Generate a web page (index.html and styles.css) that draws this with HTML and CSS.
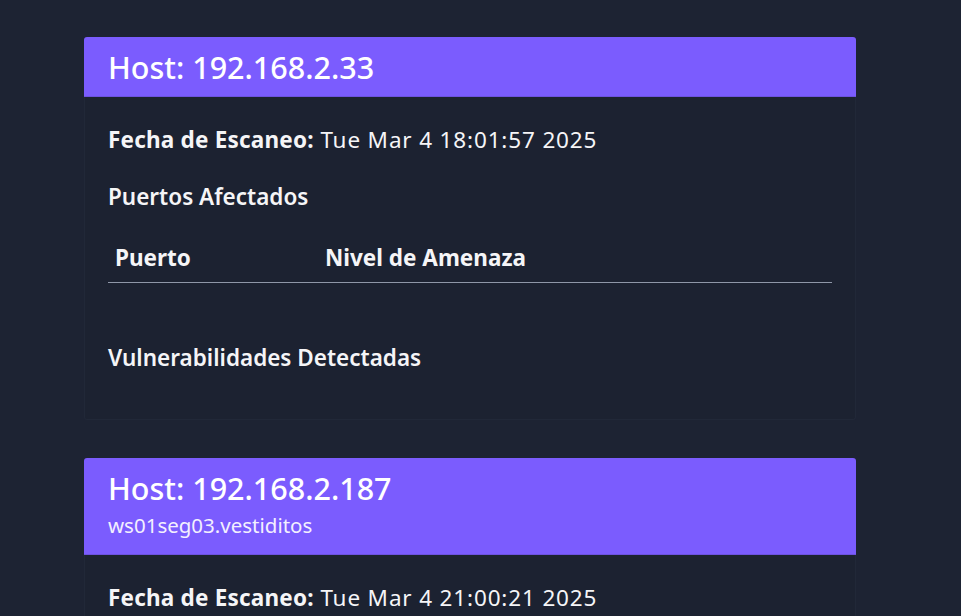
FILE: index.html
```html
<!DOCTYPE html>
<html lang="es">
<head>
<meta charset="utf-8">
<title>Reporte</title>
<link rel="stylesheet" href="styles.css">
</head>
<body>
<main class="page">
  <section class="card">
    <header class="card-head">
      <h2 class="host">Host: 192.168.2.33</h2>
    </header>
    <div class="card-body">
      <p class="scan"><strong>Fecha de Escaneo:</strong> Tue Mar 4 18:01:57 2025</p>
      <h3 class="section-title">Puertos Afectados</h3>
      <table class="ports">
        <thead>
          <tr><th class="col-port">Puerto</th><th>Nivel de Amenaza</th></tr>
        </thead>
        <tbody></tbody>
      </table>
      <h3 class="section-title vulns">Vulnerabilidades Detectadas</h3>
      <div class="vuln-list"></div>
    </div>
  </section>
  <section class="card">
    <header class="card-head">
      <h2 class="host">Host: 192.168.2.187</h2>
      <p class="hostname">ws01seg03.vestiditos</p>
    </header>
    <div class="card-body">
      <p class="scan"><strong>Fecha de Escaneo:</strong> Tue Mar 4 21:00:21 2025</p>
    </div>
  </section>
</main>
</body>
</html>
```
FILE: styles.css
```css
html, body {
  margin: 0;
  padding: 0;
  background: #1d2333;
}
body {
  font-family: "Noto Sans", "Open Sans", sans-serif;
  color: #f5f5f7;
}
.page {
  width: 772px;
  margin-left: 84px;
  padding-top: 37px;
}
.card {
  margin-bottom: 38px;
}
.card-head {
  background: #7b5cfe;
  border-radius: 3px 3px 0 0;
  border-bottom: 1px solid #6d52e0;
  padding: 12px 24px 11px;
}
.host {
  margin: 0;
  font-size: 30.5px;
  font-weight: 500;
  line-height: 36px;
  color: #ffffff;
}
.hostname {
  margin: 4px 0 3px;
  font-size: 20.5px;
  line-height: 30px;
  color: #f3f0ff;
}
.card-body {
  background: #1c2231;
  border: 1px solid #212838;
  border-top: none;
  border-radius: 0 0 3px 3px;
  padding: 28px 23px 46px;
}
.scan {
  margin: 0;
  font-size: 22.5px;
  line-height: 30px;
  letter-spacing: 0.85px;
}
.scan strong {
  font-weight: 700;
  letter-spacing: 0.2px;
}
.section-title {
  margin: 27px 0 0;
  font-size: 22.5px;
  font-weight: 600;
  line-height: 30px;
}
.ports {
  width: 100%;
  border-collapse: collapse;
  margin-top: 25px;
}
.ports th {
  text-align: left;
  font-size: 22.5px;
  font-weight: 700;
  padding: 8px 6px 11px 7px;
  line-height: 26px;
  border-bottom: 1px solid #8f97a8;
}
.col-port {
  width: 197px;
}
.vulns {
  margin-top: 60px;
}
```
